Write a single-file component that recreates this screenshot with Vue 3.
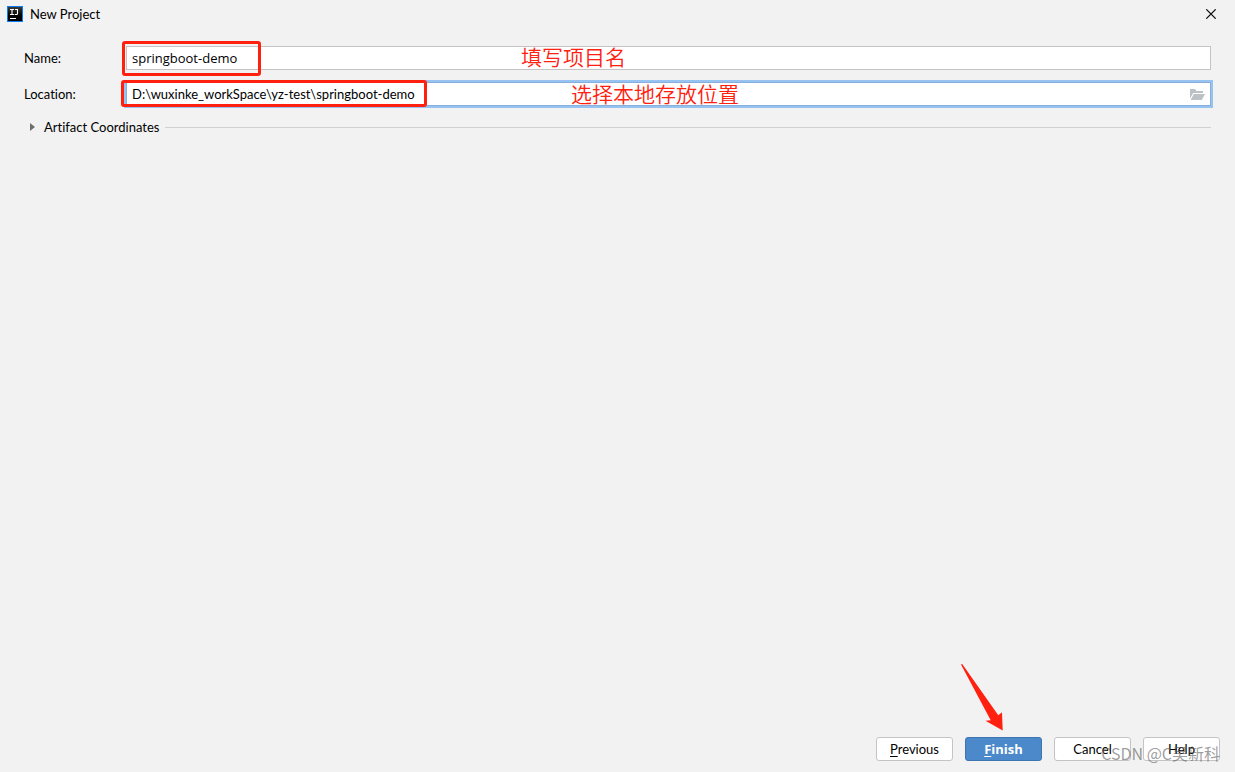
<script setup>
import { ref } from 'vue'

const name = ref('springboot-demo')
const location = ref('D:\\wuxinke_workSpace\\yz-test\\springboot-demo')
</script>

<template>
  <main class="dialog">
    <header class="titlebar">
      <svg class="logo" viewBox="0 0 16 16" aria-hidden="true">
        <defs>
          <linearGradient id="logo-fill" x1="0" y1="0" x2="0" y2="1">
            <stop offset="0" stop-color="#3a3a3a" />
            <stop offset="0.6" stop-color="#000" />
          </linearGradient>
        </defs>
        <rect width="16" height="16" fill="#087cfa" />
        <rect x="1" y="1" width="14" height="14" fill="url(#logo-fill)" />
        <path d="M3 3.5h4M5 3.5v5M3 8.5h4M8 3.5h3M10.5 3.5v4q0 1-1 1h-1.8" fill="none" stroke="#fff" stroke-width="1.1" />
        <rect x="3" y="12" width="6" height="1" fill="#fff" />
      </svg>
      <h1 class="title">New Project</h1>
      <button class="close" type="button" aria-label="Close">
        <svg viewBox="0 0 10 10" aria-hidden="true"><path d="M0.3 0.3l9.4 9.4M9.7 0.3l-9.4 9.4" stroke="#111" stroke-width="1.2" /></svg>
      </button>
    </header>

    <form class="form" @submit.prevent>
      <div class="row">
        <label for="name">Name:</label>
        <div class="field">
          <input id="name" v-model="name" class="name-input" type="text" />
          <span class="mark mark-name"></span>
          <span class="note note-name">填写项目名</span>
        </div>
      </div>
      <div class="row">
        <label for="location">Location:</label>
        <div class="field focused">
          <input id="location" v-model="location" type="text" />
          <button class="browse" type="button" aria-label="Browse">
            <svg viewBox="0 0 15 12" aria-hidden="true">
              <path d="M0 1h5l1.5 2H13v2H3.2L0 10.5z" fill="#bcc1c5" />
              <path d="M3.8 6H15l-3.2 6H0.6z" fill="#bcc1c5" />
            </svg>
          </button>
          <span class="mark mark-location"></span>
          <span class="note note-location">选择本地存放位置</span>
        </div>
      </div>
      <button class="expander" type="button" aria-expanded="false">
        <svg class="caret" viewBox="0 0 5 8" aria-hidden="true"><path d="M0 0l5 4-5 4z" fill="#6e6e6e" /></svg>
        <span>Artifact Coordinates</span>
        <span class="rule"></span>
      </button>
    </form>

    <footer class="actions">
      <button class="btn" type="button"><u>P</u>revious</button>
      <button class="btn primary" type="button">
        <u>F</u>inish
        <svg class="arrow" viewBox="0 0 42 67" aria-hidden="true">
          <path d="M0 0.5L1.2 0L37.3 51.3L41 48.3L41.7 66.5L24.5 56.8L29.7 56.3Z" fill="#ff2010" />
        </svg>
      </button>
      <button class="btn" type="button">Cancel</button>
      <button class="btn" type="button">Help</button>
      <span class="watermark">CSDN @C吴新科</span>
    </footer>
  </main>
</template>

<style>
body {
  background: #f2f2f2;
}
</style>

<style scoped>
.dialog {
  display: flex;
  flex-direction: column;
  box-sizing: border-box;
  min-height: 100vh;
  background: #f2f2f2;
  color: #000;
  font: 13px/18px Lato, "Noto Sans CJK SC", sans-serif;
  font-variant-ligatures: none;
}
.titlebar {
  display: flex;
  align-items: center;
  height: 28px;
  padding: 0 18px 0 7px;
}
.logo {
  width: 16px;
  height: 16px;
}
.title {
  flex: 1;
  margin: 0 0 0 7px;
  font-size: 13px;
  font-weight: 400;
}
button {
  font: inherit;
  font-variant-ligatures: none;
  color: inherit;
}
.close,
.browse,
.expander {
  padding: 0;
  border: 0;
  background: none;
}
.close,
.close svg {
  display: block;
  width: 12px;
  height: 10px;
}
.form {
  display: flex;
  flex-direction: column;
  gap: 12px;
  padding: 18px 24px 0;
}
.row {
  display: flex;
  align-items: center;
}
.row label {
  width: 102px;
}
.field {
  position: relative;
  display: flex;
  flex: 1;
  align-items: center;
  box-sizing: border-box;
  height: 24px;
  border: 1px solid #c4c4c4;
  background: #fff;
}
.focused {
  border-color: #87afda;
  box-shadow: 0 0 0 2px #97c3f3;
}
.field input {
  flex: 1;
  min-width: 0;
  padding: 0 5px;
  border: 0;
  outline: 0;
  background: none;
  color: inherit;
  font: inherit;
}
.field .name-input {
  font-family: "Open Sans", sans-serif;
}
.browse {
  margin-right: 5px;
}
.browse svg {
  display: block;
  width: 15px;
  height: 12px;
}
.mark {
  position: absolute;
  box-sizing: border-box;
  border: 3px solid #ff2010;
  border-radius: 3px;
  pointer-events: none;
}
.mark-name {
  left: -5px;
  top: -6px;
  width: 139px;
  height: 35px;
}
.mark-location {
  left: -6px;
  top: -3px;
  width: 306px;
  height: 27px;
}
.note {
  position: absolute;
  color: #ff2010;
  font: 350 21px/24px "Noto Sans CJK SC", sans-serif;
  white-space: nowrap;
  pointer-events: none;
}
.note-name {
  left: 394px;
  top: -3px;
}
.note-location {
  left: 444px;
  top: -2px;
}
.expander {
  display: flex;
  align-items: center;
  padding-left: 6px;
}
.caret {
  width: 5px;
  height: 8px;
  margin-right: 9px;
}
.rule {
  flex: 1;
  height: 1px;
  margin-left: 6px;
  background: #d0d0d0;
}
.actions {
  position: relative;
  display: flex;
  justify-content: flex-end;
  gap: 12px;
  margin-top: auto;
  padding: 0 15px 11px;
}
.btn {
  position: relative;
  box-sizing: border-box;
  width: 77px;
  height: 24px;
  padding: 0;
  border: 1px solid #c4c4c4;
  border-radius: 3px;
  background: #fff;
  line-height: 22px;
}
.btn u {
  text-underline-offset: 2px;
}
.primary {
  border-color: #3d75b3;
  background: #4c89ca;
  color: #fff;
  font-family: "Open Sans", sans-serif;
  font-weight: 700;
}
.arrow {
  position: absolute;
  left: -5px;
  bottom: 29px;
  width: 42px;
  height: 67px;
  pointer-events: none;
}
.watermark {
  position: absolute;
  right: 15px;
  bottom: 8px;
  color: rgba(90, 90, 90, 0.6);
  font: 16px/22px "Noto Sans CJK SC", sans-serif;
  pointer-events: none;
}
</style>
